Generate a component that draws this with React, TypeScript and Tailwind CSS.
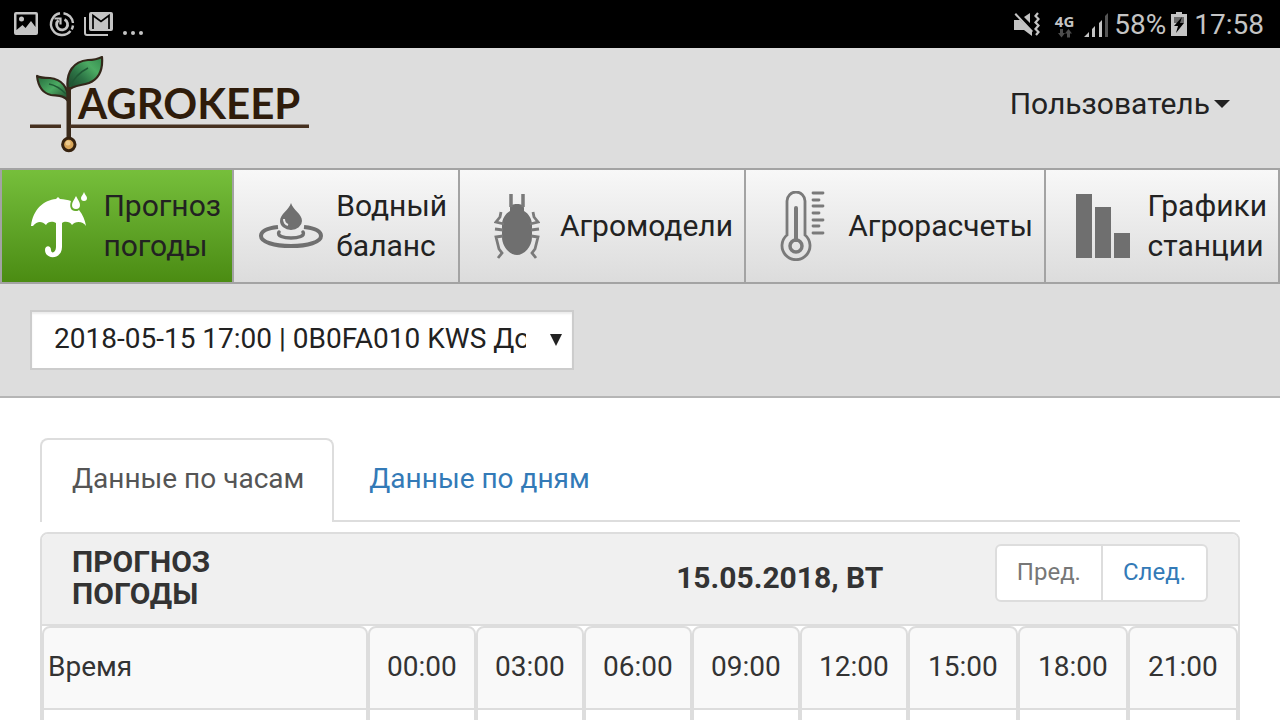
import React, { useState } from "react";

const hours = [
  { time: "00:00", width: "" },
  { time: "03:00", width: "" },
  { time: "06:00", width: "" },
  { time: "09:00", width: "" },
  { time: "12:00", width: "" },
  { time: "15:00", width: "w-[9.2%]" },
  { time: "18:00", width: "w-[9.2%]" },
  { time: "21:00", width: "w-[9.2%]" },
];

function StatusBar() {
  return (
    <div className="flex h-12 shrink-0 items-center justify-between bg-black pl-3 pr-4 pt-0.5 text-[#c4c4c4]">
      <div className="flex items-center">
        <svg width="28" height="28" viewBox="0 0 28 28" fill="currentColor">
          <path
            fillRule="evenodd"
            d="M4 1h20a2 2 0 0 1 2 2v19a2 2 0 0 1-2 2H4a2 2 0 0 1-2-2V3a2 2 0 0 1 2-2zM4.500 3.500V19l6-5 3 3 5.500-7 4.500 6V3.500z"
          />
          <circle cx="9.500" cy="8" r="2.500" />
        </svg>
        <svg
          className="ml-2"
          width="28"
          height="28"
          viewBox="0 0 28 28"
          fill="none"
          stroke="currentColor"
          strokeWidth="2.400"
        >
          <path d="M12 2.200A11 11 0 1 0 22.500 20" />
          <path d="M15.500 2.200A11 11 0 0 1 25 12" />
          <path d="M25 14.500a11 11 0 0 1-1.300 4" />
          <path d="M16.500 8.500a5.500 5.500 0 1 1-6 .800" strokeWidth="2.800" />
          <path d="M6.500 7.500h6v6" strokeWidth="2.200" />
        </svg>
        <svg
          className="ml-2"
          width="30"
          height="28"
          viewBox="0 0 30 28"
          fill="none"
          stroke="currentColor"
          strokeWidth="2"
        >
          <path d="M1 6v16a2 2 0 0 0 2 2h21" />
          <path
            d="M7 2h20a1 1 0 0 1 1 1v15a1 1 0 0 1-1 1H7a1 1 0 0 1-1-1V3a1 1 0 0 1 1-1z"
            fill="currentColor"
          />
          <path d="M9 18V4.500l8 6 8-6V18" stroke="#000" strokeWidth="1.700" />
        </svg>
        <svg className="ml-2" width="24" height="28" viewBox="0 0 24 28" fill="currentColor">
          <circle cx="3" cy="22" r="2" />
          <circle cx="11" cy="22" r="2" />
          <circle cx="19" cy="22" r="2" />
        </svg>
      </div>

      <div className="flex items-center">
        <svg width="28" height="26" viewBox="0 0 28 26" fill="currentColor">
          <path d="M1 8h6l12 11v5l-8-6H1z" />
          <path d="M17 1v10l-6-6zM3 1l17 18-1.500 1.500L1.500 2.500z" />
          <path
            d="M25 1l-2.500 3 3 3-3 3.500 3 3-3 3.500 3 3-2.500 3"
            fill="none"
            stroke="currentColor"
            strokeWidth="2.200"
          />
        </svg>
        <div className="ml-3.5 flex flex-col items-center">
          <span className="font-['Open_Sans',sans-serif] text-[15px] font-bold leading-4">
            4G
          </span>
          <svg width="14" height="9" viewBox="0 0 14 9" fill="#4c4c4c">
            <path d="M2 0h3v4h2L3.500 8.500 0 4h2zM9 8.500h3v-4h2L10.500 0 7 4.500h2z" />
          </svg>
        </div>
        <svg className="ml-2.5" width="26" height="26" viewBox="0 0 26 26" fill="currentColor">
          <path d="M0 25l5-5v5zM8 17l3-3v11H8zM15 11l3-3v17h-3z" />
          <path d="M21 4l3-3v24h-3z" fill="#555" />
        </svg>
        <span className="ml-1 text-[28px]">58%</span>
        <svg className="ml-1" width="18" height="26" viewBox="0 0 18 26">
          <path d="M6 0h6v2h5v22H1V2h5z" fill="#c4c4c4" />
          <path d="M4 5h10v6H4z" fill="#6b6b6b" />
          <path d="M12 5l-8 9h4l-2 7 8-10h-4z" fill="#000" />
        </svg>
        <span className="ml-1.5 text-[28px]">17:58</span>
      </div>
    </div>
  );
}

function Logo() {
  return (
    <svg width="280" height="97" viewBox="0 0 280 97" role="img" aria-label="Agrokeep">
      <defs>
        <linearGradient id="leafRight" x1="0" y1="1" x2="1" y2="0">
          <stop offset="0" stopColor="#1d3f28" />
          <stop offset="0.400" stopColor="#2c7445" />
          <stop offset="0.700" stopColor="#4cab63" />
          <stop offset="1" stopColor="#348a4e" />
        </linearGradient>
        <linearGradient id="leafLeft" x1="1" y1="1" x2="0" y2="0">
          <stop offset="0" stopColor="#1d3f28" />
          <stop offset="0.500" stopColor="#4cab63" />
          <stop offset="1" stopColor="#23683b" />
        </linearGradient>
      </defs>
      <g stroke="#33271a" strokeWidth="2.200" strokeLinejoin="round">
        <path
          d="M38 35C35 16 44 5 58 4C64 4 68 3 72 1C73 14 69 23 59 27C50 30 43 29 38 35z"
          fill="url(#leafRight)"
        />
        <path
          d="M38 45C39 31 31 23 20 22C14 22 10 22 7 20C8 29 12 37 21 39C28 40 34 39 38 45z"
          fill="url(#leafLeft)"
        />
        <path
          d="M40 31C44 21 50 16 58 12M36 38C30 32 25 29 19 28"
          fill="none"
          stroke="#205a35"
          strokeWidth="1.500"
        />
      </g>
      <path d="M36.500 31h4.500v52h-4.500z" fill="#3a2a1b" />
      <path d="M0 68.500h31v3.500H0zM40 68.500h239v3.500H40z" fill="#463120" />
      <circle cx="38.800" cy="88.500" r="6.200" fill="#d9a65a" stroke="#36220f" strokeWidth="3" />
      <circle cx="38" cy="87" r="2.500" fill="#ecc98c" />
      <text
        x="48"
        y="63"
        fontFamily="Lato, sans-serif"
        fontSize="42"
        fontWeight="700"
        fill="#2f1c0b"
      >
        AGROKEEP
      </text>
    </svg>
  );
}

function UmbrellaIcon() {
  return (
    <svg width="58" height="68" viewBox="0 0 58 68" fill="#fff">
      <path d="M1 34C3 17 14 8 26 7l2-2 2 2c4 0 8 1 11 2-2 6 0 10 4 10 2 0 3 0 4-1 4 5 6 10 7 16-3-5-11-5-14-1-2-4-8-4-10-2v24c0 13-17 13-17 3 0-5 6-5 6 0 0 4 5 3 5-3V31c-3-2-8-2-10 2-4-4-9-4-13 1z" />
      <path d="M46 4c-2 4-4 6-4 9a4 4 0 0 0 8 0c0-3-2-5-4-9zM54 0c-1 3-3 4-3 6a3 3 0 0 0 6 0c0-2-2-3-3-6z" />
    </svg>
  );
}

function DropIcon() {
  return (
    <svg width="66" height="46" viewBox="0 0 66 46" fill="none" stroke="#707070">
      <path
        d="M20 24C10 25 3 28 3 33c0 6 13 10 30 10s30-4 30-10c0-5-7-8-17-9"
        strokeWidth="4"
      />
      <path d="M21 29c-5 8 29 8 24 0" strokeWidth="3.500" strokeLinecap="round" />
      <path
        d="M33 0c-2 7-11 11-11 18a11 9 0 0 0 22 0c0-7-9-11-11-18z"
        fill="#707070"
        stroke="none"
      />
      <path d="M26 16c0 3 1 5 4 6" stroke="#e8e8e8" strokeWidth="2" />
    </svg>
  );
}

function BugIcon() {
  return (
    <svg width="46" height="66" viewBox="0 0 46 66" fill="none" stroke="#7a7a7a" strokeWidth="2.800">
      <path
        d="M16 18v-3c0-3 3-4 7-4s7 1 7 4v3c5 3 8 8 8 14v12c0 10-8 18-15 18S8 54 8 44V32c0-6 3-11 8-14z"
        fill="#6f6f6f"
        stroke="none"
      />
      <path d="M17 1v13M29 1v13" strokeWidth="3.500" />
      <path d="M7 19l-1 5-4 5 8 2M39 19l1 5 4 5-8 2" />
      <path d="M1 36l8 1M45 36l-8 1" />
      <path d="M9 43l-7 1 3 12 3 4-4 5M37 43l7 1-3 12-3 4 4 5" />
    </svg>
  );
}

function ThermometerIcon() {
  return (
    <svg width="46" height="70" viewBox="0 0 46 70" fill="none" stroke="#7a7a7a" strokeWidth="2.800">
      <path d="M7 44V10a9 9 0 0 1 18 0v34a14 14 0 1 1-18 0z" />
      <circle cx="16" cy="55" r="6" strokeWidth="3.500" />
      <path d="M16 17v32" strokeWidth="4" strokeLinecap="round" />
      <path
        d="M33 2h10M33 9h6M33 15h10M33 22h6M33 29h10M33 35h6M33 42h10"
        strokeLinecap="round"
      />
    </svg>
  );
}

function BarsIcon() {
  return (
    <svg width="56" height="66" viewBox="0 0 56 66" fill="#6f6f6f">
      <path d="M1 1h16v64H1zM20 14h16v51H20zM39 40h16v25H39z" />
    </svg>
  );
}

const navItems = [
  { title: "Прогноз погоды", icon: <UmbrellaIcon /> },
  { title: "Водный баланс", icon: <DropIcon /> },
  { title: "Агромодели", icon: <BugIcon /> },
  { title: "Агрорасчеты", icon: <ThermometerIcon /> },
  { title: "Графики станции", icon: <BarsIcon /> },
];

function MainNav() {
  return (
    <nav className="grid grid-cols-[232fr_226fr_286fr_300fr_234fr] border-y-2 border-l-2 border-[#a3a3a3]">
      {navItems.map((item, index) => (
        <a
          key={item.title}
          href="#"
          className={`flex h-28 items-center justify-between border-r-2 border-[#a3a3a3] bg-linear-to-b pl-[21px] pr-[11px] text-[30px] leading-10 text-[#222] ${
            index === 0 ? "from-[#76bf3b] to-[#4b8c12]" : "from-[#f8f8f8] to-[#dcdcdc]"
          }`}
        >
          <span className="flex w-18 shrink-0 justify-center">{item.icon}</span>
          <span className="w-min">{item.title}</span>
        </a>
      ))}
    </nav>
  );
}

function App() {
  const [station, setStation] = useState("0B0FA010");

  return (
    <div className="flex h-screen flex-col overflow-hidden bg-white font-[Roboto,sans-serif] text-[28px] leading-10 text-[#333]">
      <StatusBar />

      <div className="shrink-0 border-b-2 border-[#b5b5b5] bg-[#ddd]">
        <header className="flex h-30 items-start justify-between pl-[30px] pr-[50px] pt-2">
          <a href="#">
            <Logo />
          </a>
          <button className="mt-7 flex items-center gap-1 text-[30px] leading-10 text-[#222]">
            Пользователь
            <svg width="16" height="8" viewBox="0 0 16 8" fill="#222">
              <path d="M0 0h16l-8 8z" />
            </svg>
          </button>
        </header>

        <MainNav />

        <div className="px-[30px] py-[26px]">
          <div className="relative w-[544px]">
            <select
              aria-label="Станция"
              value={station}
              onChange={(e) => setStation(e.target.value)}
              className="h-[60px] w-full appearance-none border-2 border-[#ccc] bg-white pb-0.5 pl-[22px] pr-[46px] text-[28px] text-[#222] shadow-[inset_0_2px_2px_rgba(0,0,0,0.075)]"
            >
              <option value="0B0FA010">2018-05-15 17:00 | 0B0FA010 KWS Долина</option>
            </select>
            <svg
              className="pointer-events-none absolute right-3 top-6"
              width="12"
              height="12"
              viewBox="0 0 12 12"
              fill="#222"
            >
              <path d="M0 0h12L6 12z" />
            </svg>
          </div>
        </div>
      </div>

      <main className="px-10 pt-10">
        <div role="tablist" className="flex">
          <button
            role="tab"
            aria-selected="true"
            className="h-[84px] rounded-t-lg border-2 border-b-0 border-[#ddd] pb-1 pl-[30px] pr-7 text-[#555]"
          >
            Данные по часам
          </button>
          <div className="flex-1 border-b-2 border-[#ddd]">
            <button role="tab" aria-selected="false" className="h-[82px] px-[35px] text-[#337ab7]">
              Данные по дням
            </button>
          </div>
        </div>

        <section className="mt-2.5 rounded-t-lg border-2 border-[#ddd]">
          <div className="grid grid-cols-[2fr_3fr_2fr] items-start rounded-t-md border-b-2 border-[#ddd] bg-[#f0f0f0] px-[30px] pb-3.5 pt-2.5 text-[30px] font-bold leading-8">
            <h3 className="mt-0.5 w-min">ПРОГНОЗ ПОГОДЫ</h3>
            <h3 className="mt-[18px] whitespace-nowrap text-right">15.05.2018, ВТ</h3>
            <div className="flex justify-end text-2xl font-normal">
              <button className="h-[58px] rounded-l-md border-2 border-[#ddd] bg-white px-5 pb-0.5 text-[#777]">
                Пред.
              </button>
              <button className="h-[58px] rounded-r-md border-2 border-l-0 border-[#ddd] bg-white px-5 pb-0.5 text-[#337ab7]">
                След.
              </button>
            </div>
          </div>

          <table className="w-full table-fixed border-separate border-spacing-0">
            <thead>
              <tr>
                <th className="h-[84px] w-[27.25%] rounded-t-lg border-2 border-[#ddd] bg-[#f9f9f9] px-1 pb-0.5 text-left font-normal">
                  Время
                </th>
                {hours.map(({ time, width }) => (
                  <th
                    key={time}
                    className={`rounded-t-lg border-2 border-[#ddd] bg-[#f9f9f9] pb-0.5 text-center font-normal ${width}`}
                  >
                    {time}
                  </th>
                ))}
              </tr>
            </thead>
            <tbody>
              <tr>
                <td className="h-20 border-x-2 border-[#ddd]" />
                {hours.map(({ time }) => (
                  <td key={time} className="border-x-2 border-[#ddd]" />
                ))}
              </tr>
            </tbody>
          </table>
        </section>
      </main>
    </div>
  );
}

export default App;
